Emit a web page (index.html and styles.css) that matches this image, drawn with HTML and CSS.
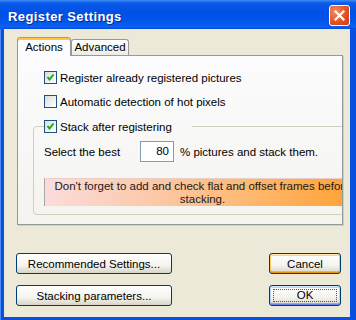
FILE: index.html
```html
<!DOCTYPE html>
<html lang="en">
<head>
    <meta charset="UTF-8">
    <title>Register Settings</title>
    <link rel="stylesheet" href="styles.css">
</head>
<body>
    <div class="window">
        <div class="titlebar">
            <span class="title">Register Settings</span>
            <button class="close" aria-label="Close">
                <svg width="11" height="11" viewBox="0 0 11 11">
                    <path d="M1.5 1.5 L9.5 9.5 M9.5 1.5 L1.5 9.5" stroke="#fff" stroke-width="2.2" stroke-linecap="square" fill="none"/>
                </svg>
            </button>
        </div>
        <div class="client">
            <div class="tabs">
                <div class="tab active">Actions</div>
                <div class="tab">Advanced</div>
            </div>
            <div class="panel">
                <label class="check first">
                    <span class="box"><svg width="11" height="11" viewBox="0 0 11 11"><path d="M2.5 5 L4.5 7.5 L8.5 2.5" stroke="#21a121" stroke-width="2" fill="none"/></svg></span>
                    Register already registered pictures
                </label>
                <label class="check">
                    <span class="box"></span>
                    Automatic detection of hot pixels
                </label>
                <fieldset class="group">
                    <legend>
                        <label class="check">
                            <span class="box"><svg width="11" height="11" viewBox="0 0 11 11"><path d="M2.5 5 L4.5 7.5 L8.5 2.5" stroke="#21a121" stroke-width="2" fill="none"/></svg></span>
                            Stack after registering
                        </label>
                    </legend>
                    <div class="best-row">
                        <span class="best-label">Select the best</span>
                        <span class="num">80</span>
                        <span class="best-after">% pictures and stack them.</span>
                    </div>
                    <div class="note">Don't forget to add and check flat and offset frames before stacking.</div>
                </fieldset>
            </div>
            <div class="buttons">
                <button class="btn">Recommended Settings...</button>
                <button class="btn hot">Cancel</button>
                <button class="btn">Stacking parameters...</button>
                <button class="btn focused"><span class="focus-rect">OK</span></button>
            </div>
        </div>
    </div>
</body>
</html>
```
FILE: styles.css
```css
body {
    margin: 0;
    font-family: 'Liberation Sans', Arial, sans-serif;
    font-size: 11.5px;
    color: #000;
}
.window {
    width: 356px;
    height: 320px;
    display: flex;
    flex-direction: column;
    background: #0a50e0;
    box-shadow: inset 1px 0 #4a8cf2;
    overflow: hidden;
}
.titlebar {
    height: 29px;
    flex-shrink: 0;
    display: flex;
    align-items: center;
    justify-content: space-between;
    background: linear-gradient(to bottom, #3d8ef5 0px, #0b5ae9 3px, #0050e6 12px, #0056ec 22px, #0a62f2 27px, #0047d6 29px);
}
.title {
    color: #fff;
    font-weight: bold;
    font-size: 13px;
    letter-spacing: 0.4px;
    margin-left: 8px;
    padding-top: 3px;
    text-shadow: 1px 1px #0c2a9a;
}
.close {
    width: 21px;
    height: 21px;
    margin-right: 6px;
    margin-top: 1px;
    padding: 0;
    border: 1px solid #fff;
    border-radius: 3px;
    background: radial-gradient(circle at 30% 30%, #f28a66, #e0501f 60%, #c8401a);
    display: flex;
    align-items: center;
    justify-content: center;
}
.client {
    flex: 1;
    margin: 0 6px 3px 4px;
    background: #ece9d8;
    display: flex;
    flex-direction: column;
}
.tabs {
    display: flex;
    align-items: flex-end;
    height: 18px;
    margin: 8px 0 0 13px;
}
.tab {
    box-sizing: border-box;
    height: 16px;
    width: 58px;
    border: 1px solid #919b9c;
    border-bottom: none;
    border-radius: 3px 3px 0 0;
    background: linear-gradient(to bottom, #fff, #ecebe6);
    text-align: center;
    line-height: 15px;
}
.tab.active {
    width: 54px;
    height: 19px;
    margin-bottom: -1px;
    position: relative;
    z-index: 1;
    border-top: 1px solid #e68b2c;
    box-shadow: inset 0 2px #ffc83c;
    background: #fcfcfe;
    line-height: 19px;
}
.panel {
    box-sizing: border-box;
    width: 326px;
    height: 170px;
    margin-left: 13px;
    border: 1px solid #919b9c;
    box-shadow: 1px 1px #d0cfc4;
    background: linear-gradient(to bottom, #fcfcfe, #f4f3ee);
    overflow: hidden;
}
.check {
    display: flex;
    align-items: center;
    gap: 3px;
    height: 13px;
    margin: 11px 0 0 26px;
    white-space: nowrap;
}
.check.first {
    margin-top: 15px;
}
.box {
    box-sizing: border-box;
    width: 13px;
    height: 13px;
    flex-shrink: 0;
    border: 1px solid #1c5180;
    background: linear-gradient(135deg, #dcdcd7, #fff);
}
.box svg {
    display: block;
}
.group {
    box-sizing: border-box;
    width: 345px;
    margin: 12px 0 0 15px;
    padding: 0 0 8px 10px;
    border: 1px solid #d0d0bf;
    border-radius: 4px;
    min-width: 0;
}
.group legend {
    padding: 0;
    margin-left: 0;
}
.group legend .check {
    margin: 0;
    width: 148px;
}
.best-row {
    display: flex;
    align-items: center;
    margin-top: 8px;
    white-space: nowrap;
}
.best-label {
    width: 96px;
}
.num {
    box-sizing: border-box;
    width: 34px;
    height: 21px;
    border: 1px solid #7f9db9;
    background: #fff;
    text-align: right;
    padding-right: 4px;
    line-height: 19px;
}
.best-after {
    margin-left: 6px;
}
.note {
    box-sizing: border-box;
    width: 316px;
    height: 28px;
    margin-top: 16px;
    padding-top: 1px;
    line-height: 13px;
    text-align: center;
    border-left: 1px solid #a8a8a8;
    border-top: 1px solid #e8d0c8;
    background: linear-gradient(to right, #fbdcdc, #fcc8a8 35%, #ffb870 65%, #ffa030);
    color: #1a1a1a;
}
.buttons {
    display: grid;
    grid-template-columns: 156px 72px;
    justify-content: space-between;
    row-gap: 11px;
    margin-top: 28px;
    padding: 0 9px 0 12px;
}
.btn {
    height: 21px;
    padding: 0;
    font-family: inherit;
    font-size: 11.5px;
    color: #000;
    border: 1px solid #003c74;
    border-radius: 3px;
    background: linear-gradient(to bottom, #fff, #f4f3ee 60%, #d8d4c8);
}
.btn.hot {
    box-shadow: inset 0 1px #ffe7a2, inset 0 -1px #e59700, inset 1px 0 #fbc761, inset -1px 0 #fbc761, inset 0 2px #ffd47c, inset 0 -2px #f8b330;
}
.btn.focused {
    box-shadow: inset 0 1px #cee7ff, inset 0 -1px #6982ee, inset 1px 0 #b8d2f8, inset -1px 0 #b8d2f8, inset 0 2px #bcd4f6, inset 0 -2px #89adf0;
    display: flex;
    padding: 3px;
}
.focus-rect {
    flex: 1;
    border: 1px dotted #555;
    line-height: 11px;
}
```
